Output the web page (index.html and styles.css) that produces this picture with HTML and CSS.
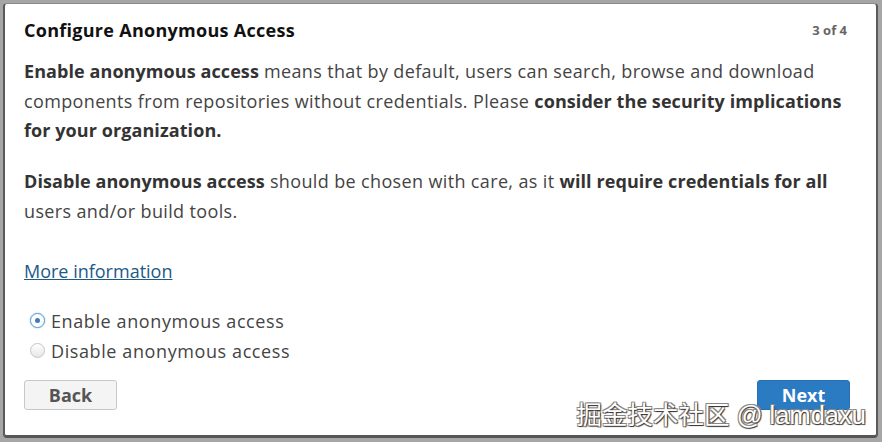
FILE: index.html
```html
<!DOCTYPE html>
<html>
<head>
<meta charset="utf-8">
<link rel="stylesheet" href="styles.css">
</head>
<body>
<div class="card">
  <div class="header">
    <h1 class="title">Configure Anonymous Access</h1>
    <span class="step">3 of 4</span>
  </div>
  <p class="para"><b>Enable anonymous access</b> means that by default, users can search, browse and download<br>components from repositories without credentials. Please <b>consider the security implications</b><br><b>for your organization.</b></p>
  <p class="para para2"><b>Disable anonymous access</b> should be chosen with care, as it <b>will require credentials for all</b><br>users and/or build tools.</p>
  <a class="more" href="#">More information</a>
  <div class="options">
    <label class="opt"><span class="radio checked"></span>Enable anonymous access</label>
    <label class="opt"><span class="radio"></span>Disable anonymous access</label>
  </div>
  <div class="actions">
    <button class="btn back">Back</button>
    <button class="btn next">Next</button>
  </div>
  <div class="watermark">掘金技术社区 @ lamdaxu</div>
</div>
</body>
</html>
```
FILE: styles.css
```css
html, body { margin: 0; padding: 0; }
body {
  width: 882px; height: 442px;
  background: #a6a6a6;
  font-family: "Open Sans", "Liberation Sans", sans-serif;
  color: #333;
  box-sizing: border-box;
  padding: 3px 4px 4px 3px;
}
.card {
  position: relative;
  box-sizing: border-box;
  height: 435px;
  background: #fff;
  border: 1px solid #8a8a8a;
  border-left: 2px solid #5a5a5a;
  border-right: 2px solid #5a5a5a;
  border-bottom: 3px solid #555;
  border-radius: 4px;
  padding: 14px 26px 0 19px;
}
.header { display: flex; justify-content: space-between; align-items: center; height: 24px; }
.title { margin: 0; font-size: 18px; font-weight: 700; color: #111; letter-spacing: 0.28px; }
.step { font-size: 13px; font-weight: 700; color: #666; margin-right: 3px; }
.para { margin: 15px 0 0; font-size: 18px; line-height: 29.7px; color: #444; letter-spacing: 0.36px; }
.para b { color: #333; letter-spacing: 0.08px; }
.para2 { margin-top: 21px; }
.more {
  display: inline-block; margin-top: 29px;
  font-size: 18px; color: #1c5a88; text-decoration: underline;
  line-height: 30px; letter-spacing: 0;
}
.options { margin-top: 20px; display: flex; flex-direction: column; }
.opt { display: flex; align-items: center; height: 30px; font-size: 18px; color: #444; letter-spacing: 0.6px; }
.radio {
  width: 15px; height: 15px; border-radius: 50%; box-sizing: border-box;
  border: 1px solid #c4c4c4; background: linear-gradient(#fff, #e6e6e6);
  margin: 0 6px 0 6px; position: relative;
}
.radio.checked { border-color: #5b9bd5; background: #fff; box-shadow: 0 0 2px #9cc3e8; }
.radio.checked::after {
  content: ""; position: absolute; left: 4px; top: 4px; width: 5px; height: 5px;
  border-radius: 50%; background: #3a7cc0;
}
.actions { display: flex; justify-content: space-between; margin-top: 14px; }
.btn {
  width: 93px; height: 30px; border-radius: 3px; font-family: inherit;
  font-size: 18px; font-weight: 700; padding: 0;
}
.back { background: #f4f4f4; border: 1px solid #c8c8c8; color: #555; }
.next { background: #2b7bc3; border: 1px solid #2670b3; color: #fff; }
.watermark {
  position: absolute; right: 10px; bottom: 4px;
  font-family: "Liberation Sans", "Noto Sans CJK SC", sans-serif;
  font-size: 25.5px; color: #fff;
  text-shadow: 1px 1px 1px #333, -1px -1px 0 #888, 1px -1px 0 #888, -1px 1px 0 #888;
}
```
